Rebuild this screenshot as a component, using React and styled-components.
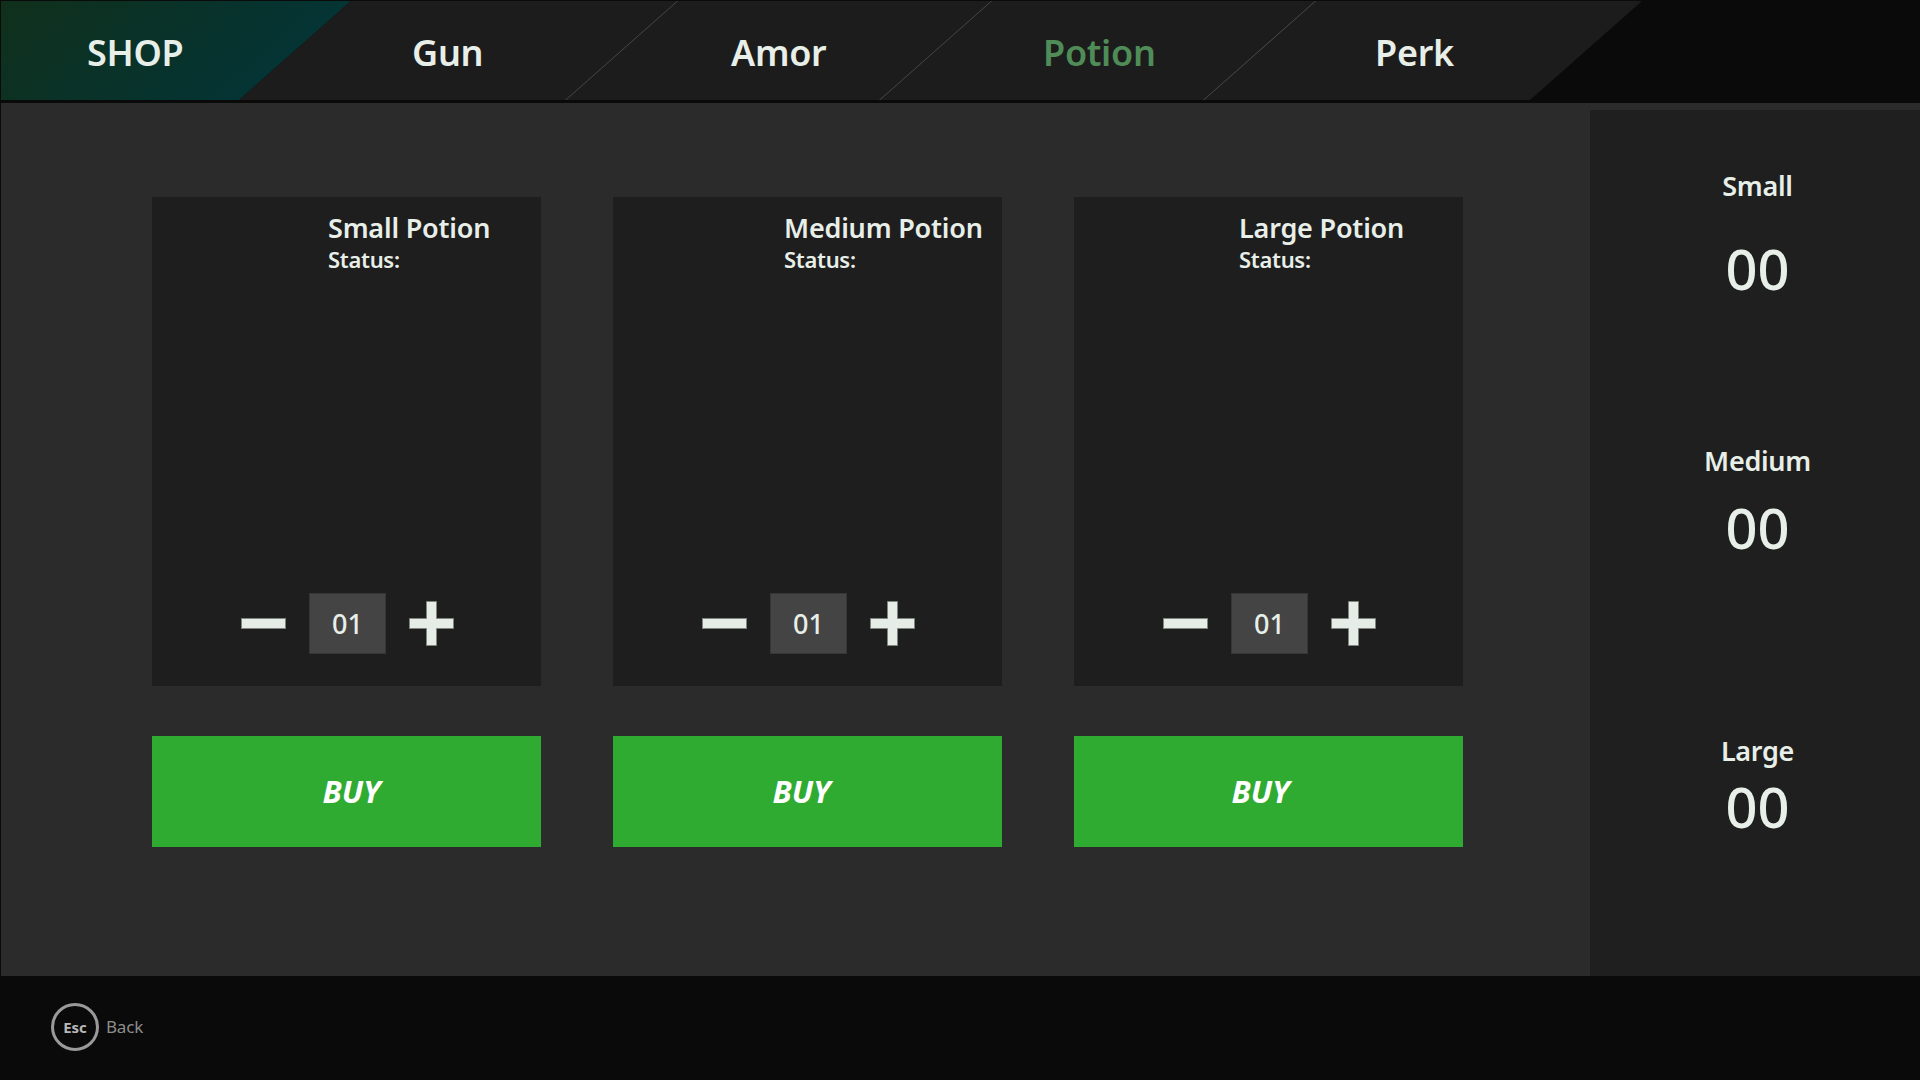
import React from "react";
import styled, { createGlobalStyle } from "styled-components";

const GlobalStyle = createGlobalStyle`
  html, body { margin: 0; padding: 0; background: #0a0a0a; }
  body { font-family: "Noto Sans", "Open Sans", sans-serif; }
  * { box-sizing: border-box; }
`;

const TEXT = "#e8efe8";

const Page = styled.div`
  width: 1920px;
  height: 1080px;
  padding: 1px 0 0 1px;
  background: #0a0a0a;
  display: flex;
  flex-direction: column;
  overflow: hidden;
`;

const Nav = styled.nav`
  height: 99px;
  flex: 0 0 99px;
  margin-bottom: 3px;
  display: flex;
  overflow: hidden;
  background: #0a0a0a;
`;

const Tab = styled.div`
  flex: 0 0 ${(p) => p.$w}px;
  height: 100%;
  transform: skewX(-48.5deg);
  transform-origin: 0 0;
  background: ${(p) =>
    p.$brand ? "linear-gradient(90deg, #10301b 0%, #043434 100%)" : "#1c1c1c"};
  border-left: ${(p) => (p.$divider ? "1px solid #505050" : "none")};
  display: flex;
  align-items: center;
  justify-content: center;
  padding-left: ${(p) => p.$pl || 0}px;
  padding-right: ${(p) => p.$pr || 0}px;
`;

const TabLabel = styled.span`
  display: block;
  transform: skewX(48.5deg);
  font-size: 36px;
  line-height: 36px;
  font-weight: 600;
  letter-spacing: -0.3px;
  padding-top: 5px;
  color: ${(p) => (p.$active ? "#4f8c57" : TEXT)};
  white-space: nowrap;
`;

const Main = styled.div`
  flex: 1;
  display: flex;
  background: #2b2b2b;
`;

const ShopArea = styled.section`
  flex: 1;
  padding: 94px 0 0 151px;
  display: flex;
  gap: 72px;
`;

const Column = styled.div`
  width: 389px;
  display: flex;
  flex-direction: column;
`;

const Card = styled.div`
  height: 489px;
  background: #1e1e1e;
  display: flex;
  flex-direction: column;
  padding: 14px 0 32px 0;
`;

const CardHeader = styled.div`
  padding-left: ${(p) => p.$pl}px;
  color: ${TEXT};
`;

const CardTitle = styled.div`
  font-size: 27px;
  line-height: 34px;
  font-weight: 600;
  letter-spacing: -0.2px;
`;

const CardStatus = styled.div`
  font-size: 22px;
  line-height: 26px;
  font-weight: 600;
  letter-spacing: -0.3px;
  margin-top: 1px;
`;

const Counter = styled.div`
  margin-top: auto;
  display: flex;
  align-items: center;
  justify-content: center;
  gap: 23px;
  padding-left: 2px;
`;

const CountBox = styled.div`
  width: 77px;
  height: 61px;
  background: #444444;
  border: 1px solid #363636;
  display: flex;
  align-items: center;
  justify-content: center;
  color: ${TEXT};
  font-size: 27px;
  font-weight: 500;
`;

const IconButton = styled.div`
  display: flex;
  align-items: center;
  justify-content: center;
  cursor: pointer;
`;

const BuyButton = styled.button`
  margin-top: 50px;
  height: 111px;
  border: none;
  background: #2fab32;
  color: #ffffff;
  font-family: "Noto Sans", sans-serif;
  font-size: 31px;
  font-weight: 700;
  font-style: italic;
  display: flex;
  align-items: center;
  justify-content: center;
  padding: 0 ${(p) => p.$pr || 0}px 2px ${(p) => p.$pl || 0}px;
  cursor: pointer;
`;

const SidePanel = styled.aside`
  width: 330px;
  flex: 0 0 330px;
  margin-top: 7px;
  background: #1f1f1f;
  display: flex;
  flex-direction: column;
  align-items: center;
  padding: 59px 0 0 5px;
`;

const Stat = styled.div`
  display: flex;
  flex-direction: column;
  align-items: center;
  margin-top: ${(p) => p.$mt}px;
  color: ${TEXT};
`;

const StatLabel = styled.div`
  font-size: 27px;
  line-height: 34px;
  font-weight: 600;
  letter-spacing: -0.3px;
`;

const StatValue = styled.div`
  font-size: 56px;
  line-height: 64px;
  font-weight: 500;
  margin-top: ${(p) => p.$gap}px;
`;

const Footer = styled.footer`
  height: 104px;
  flex: 0 0 104px;
  display: flex;
  align-items: center;
  padding-left: 50px;
  padding-bottom: 3px;
`;

const EscKey = styled.div`
  width: 48px;
  height: 48px;
  border: 3px solid #9a9a9a;
  border-radius: 50%;
  display: flex;
  align-items: center;
  justify-content: center;
  color: #b8b8b8;
  font-size: 15px;
  font-weight: 700;
`;

const BackLabel = styled.span`
  margin-left: 7px;
  color: #8d8d8d;
  font-size: 17px;
  letter-spacing: -0.2px;
`;

const Minus = () => (
  <svg width="45" height="11" viewBox="0 0 45 11">
    <rect x="0.5" y="0.5" width="44" height="10" fill="#e6ede6" stroke="#7f857f" strokeWidth="1" />
  </svg>
);

const Plus = () => (
  <svg width="45" height="45" viewBox="0 0 45 45">
    <path
      d="M17.5 0.5 H27.5 V17.5 H44.5 V27.5 H27.5 V44.5 H17.5 V27.5 H0.5 V17.5 H17.5 Z"
      fill="#e6ede6"
      stroke="#7f857f"
      strokeWidth="1"
    />
  </svg>
);

const tabs = [
  { label: "SHOP", w: 350, brand: true, pl: 30 },
  { label: "Gun", w: 326, pr: 21 },
  { label: "Amor", w: 314, divider: true },
  { label: "Potion", w: 324, divider: true, active: true, pl: 4 },
  { label: "Perk", w: 327, divider: true, pr: 17 },
];

const potions = [
  { name: "Small Potion", pl: 176, buyPl: 10 },
  { name: "Medium Potion", pl: 171, buyPr: 12 },
  { name: "Large Potion", pl: 165, buyPr: 16 },
];

const stats = [
  { label: "Small", mt: 0, gap: 33 },
  { label: "Medium", mt: 144, gap: 17 },
  { label: "Large", mt: 175, gap: 6 },
];

export default function App() {
  return (
    <>
      <GlobalStyle />
      <Page>
        <Nav>
          {tabs.map((t) => (
            <Tab
              key={t.label}
              $w={t.w}
              $brand={t.brand}
              $divider={t.divider}
              $pl={t.pl}
              $pr={t.pr}
            >
              <TabLabel $active={t.active}>{t.label}</TabLabel>
            </Tab>
          ))}
        </Nav>
        <Main>
          <ShopArea>
            {potions.map((p) => (
              <Column key={p.name}>
                <Card>
                  <CardHeader $pl={p.pl}>
                    <CardTitle>{p.name}</CardTitle>
                    <CardStatus>Status:</CardStatus>
                  </CardHeader>
                  <Counter>
                    <IconButton>
                      <Minus />
                    </IconButton>
                    <CountBox>01</CountBox>
                    <IconButton>
                      <Plus />
                    </IconButton>
                  </Counter>
                </Card>
                <BuyButton $pl={p.buyPl} $pr={p.buyPr}>BUY</BuyButton>
              </Column>
            ))}
          </ShopArea>
          <SidePanel>
            {stats.map((s) => (
              <Stat key={s.label} $mt={s.mt}>
                <StatLabel>{s.label}</StatLabel>
                <StatValue $gap={s.gap}>00</StatValue>
              </Stat>
            ))}
          </SidePanel>
        </Main>
        <Footer>
          <EscKey>Esc</EscKey>
          <BackLabel>Back</BackLabel>
        </Footer>
      </Page>
    </>
  );
}
